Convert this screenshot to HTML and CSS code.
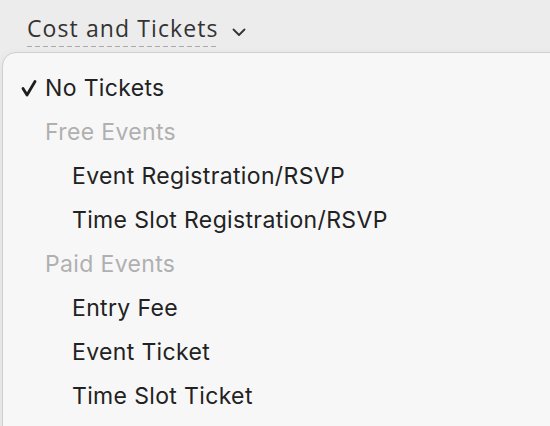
FILE: index.html
```html
<!DOCTYPE html>
<html>
<head>
<meta charset="utf-8">
<link rel="stylesheet" href="styles.css">
</head>
<body>
<div class="page">
  <div class="trigger">
    <span class="trigger-label">Cost and Tickets</span>
    <svg class="chevron" width="14" height="9" viewBox="0 0 14 9"><path d="M1.5 1.5 L7 7 L12.5 1.5" fill="none" stroke="#333" stroke-width="1.8" stroke-linecap="round" stroke-linejoin="round"/></svg>
  </div>
  <div class="menu">
    <div class="item selected"><svg class="check" width="16" height="18" viewBox="0 0 16 18"><path d="M2 9.5 L6 16 L14 2.5" fill="none" stroke="#1e1e1e" stroke-width="2.8" stroke-linecap="round" stroke-linejoin="round"/></svg>No Tickets</div>
    <div class="item group">Free Events</div>
    <div class="item sub">Event Registration/RSVP</div>
    <div class="item sub">Time Slot Registration/RSVP</div>
    <div class="item group">Paid Events</div>
    <div class="item sub">Entry Fee</div>
    <div class="item sub">Event Ticket</div>
    <div class="item sub">Time Slot Ticket</div>
  </div>
</div>
</body>
</html>
```
FILE: styles.css
```css
html, body {
  margin: 0;
  padding: 0;
  background: #ececec;
  overflow: hidden;
}
.page {
  width: 550px;
  height: 426px;
  overflow: hidden;
}
.trigger {
  display: flex;
  align-items: center;
  gap: 13px;
  padding: 14px 0 0 27px;
  height: 46px;
  box-sizing: border-box;
}
.trigger-label {
  font-family: "Open Sans", sans-serif;
  font-size: 23px;
  color: #333;
  line-height: 28px;
  background-image: linear-gradient(to right, #aaa 5px, transparent 5px);
  background-size: 8px 1px;
  background-repeat: repeat-x;
  background-position: 0 100%;
  padding-bottom: 5px;
  letter-spacing: 1.1px;
}
.chevron {
  margin-top: 4px;
}
.menu {
  margin: 6px 0 0 2px;
  width: 580px;
  height: 400px;
  background: #f7f7f8;
  border: 1px solid #cfcfcf;
  border-radius: 14px 0 0 0;
  padding-top: 13px;
  box-sizing: border-box;
  box-shadow: 0 2px 10px rgba(0,0,0,0.06);
}
.item {
  height: 44px;
  display: flex;
  align-items: center;
  font-family: "Inter", "Liberation Sans", sans-serif;
  font-size: 23px;
  letter-spacing: 0.35px;
  color: #222;
  padding-left: 42px;
  position: relative;
}
.check {
  position: absolute;
  left: 18px;
  top: 13px;
}
.group {
  color: #b0b0b0;
}
.sub {
  padding-left: 69px;
}
```
